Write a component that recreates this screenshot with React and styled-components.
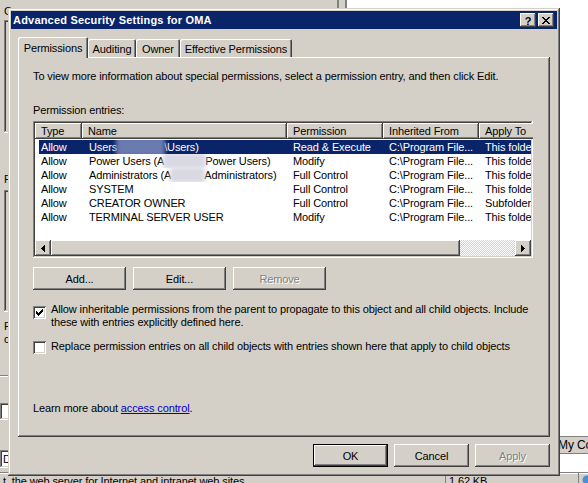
import React from 'react';
import styled, { createGlobalStyle, css } from 'styled-components';

const face = '#d4d0c8';
const shadow = '#808080';
const dark = '#404040';
const navy = '#0a246a';

const GlobalStyle = createGlobalStyle`
  html, body { margin: 0; padding: 0; }
  body {
    background: ${face};
    font-family: "Liberation Sans", Arial, sans-serif;
    font-size: 11px;
    letter-spacing: -0.12px;
    color: #000;
  }
`;

const raised = css`
  box-shadow: inset -1px -1px ${dark}, inset 1px 1px #fff, inset -2px -2px ${shadow}, inset 2px 2px ${face};
`;

const sunken = css`
  box-shadow: inset -1px -1px #fff, inset 1px 1px ${shadow}, inset -2px -2px ${face}, inset 2px 2px ${dark};
`;

// pixel glyphs for the classic controls
const closeGlyph = [
  [0, 0, 2], [6, 0, 2], [1, 1, 2], [5, 1, 2], [2, 2, 4], [3, 3, 2],
  [2, 4, 4], [1, 5, 2], [5, 5, 2], [0, 6, 2], [6, 6, 2],
];
const checkGlyph = [
  [6, 0, 1], [5, 1, 2], [0, 2, 1], [4, 2, 3], [0, 3, 2], [3, 3, 3],
  [0, 4, 5], [1, 5, 3], [2, 6, 1],
];

const PixelIcon = ({ rows, w, h }) => (
  <svg width={w} height={h} viewBox={`0 0 ${w} ${h}`} shapeRendering="crispEdges">
    {rows.map(([x, y, len], i) => (
      <rect key={i} x={x} y={y} width={len} height={1} fill="#000" />
    ))}
  </svg>
);

const Arrow = ({ dir }) => (
  <svg width="4" height="7" viewBox="0 0 4 7" shapeRendering="crispEdges">
    {[1, 3, 5, 7].map((hgt, i) => (
      <rect key={i} x={dir === 'left' ? i : 3 - i} y={(7 - hgt) / 2} width={1} height={hgt} fill="#000" />
    ))}
  </svg>
);

/* ---------- the window behind ---------- */

const Desktop = styled.div`
  position: relative;
  width: 588px;
  height: 483px;
  overflow: hidden;
  background: ${face};
`;

const BackWindow = styled.div`
  display: flex;
  flex-direction: column;
  height: 100%;
`;

const BackBody = styled.div`
  flex: 1;
  display: flex;
  min-height: 0;
`;

const LeftPane = styled.div`
  width: 337px;
  flex-shrink: 0;
  box-sizing: border-box;
  padding-left: 4px;
  display: flex;
  flex-direction: column;
`;

const PaneLabel = styled.div`
  margin-top: ${(p) => p.$mt || 0}px;
  line-height: 13px;
  white-space: pre-line;
`;

const PaneBox = styled.div`
  margin-top: ${(p) => p.$mt || 0}px;
  margin-left: ${(p) => (p.$flush ? -4 : 0)}px;
  height: ${(p) => p.$h}px;
  flex-shrink: 0;
  box-sizing: border-box;
  padding-left: 3px;
  line-height: ${(p) => p.$h}px;
  background: ${(p) => (p.$white ? '#fff' : face)};
  ${sunken}
`;

const Groove = styled.div`
  margin: ${(p) => p.$mt}px 0 0 -4px;
  border-top: 1px solid ${shadow};
  border-bottom: 1px solid #fff;
`;

const Splitter = styled.div`
  width: 10px;
  flex-shrink: 0;
  box-sizing: border-box;
  border-left: 2px solid ${shadow};
  border-right: 2px solid ${shadow};
`;

const RightPane = styled.div`
  flex: 1;
  background: #fff;
  display: flex;
  flex-direction: column;
  justify-content: flex-end;
  padding-bottom: 18px;
`;

const ListStrip = styled.div`
  height: 16px;
  line-height: 16px;
  padding-left: 211px;
  white-space: nowrap;
  background: ${face};
  border-top: 1px solid ${shadow};
  border-bottom: 1px solid ${shadow};
  font-size: 12px;
`;

const StatusBar = styled.div`
  height: 10px;
  flex-shrink: 0;
  display: flex;
  border-top: 1px solid ${shadow};
  box-shadow: inset 0 1px #fff;
  line-height: 13px;
  white-space: nowrap;
  overflow: hidden;
`;

const StatusCell = styled.div`
  width: ${(p) => (p.$w ? `${p.$w}px` : 'auto')};
  flex: ${(p) => (p.$w ? '0 0 auto' : 1)};
  box-sizing: border-box;
  padding: 2px 0 0 3px;
  border-left: ${(p) => (p.$first ? 'none' : `1px solid ${shadow}`)};
`;

/* ---------- the dialog ---------- */

const Dialog = styled.div`
  position: absolute;
  left: 8px;
  top: 8px;
  width: 552px;
  height: 468px;
  box-sizing: border-box;
  padding: 3px;
  display: flex;
  flex-direction: column;
  background: ${face};
  box-shadow: inset -1px -1px ${dark}, inset 1px 1px ${face}, inset -2px -2px ${shadow}, inset 2px 2px #fff;
`;

const TitleBar = styled.div`
  height: 18px;
  flex-shrink: 0;
  display: flex;
  align-items: center;
  gap: 2px;
  padding: 0 3px 0 2px;
  background: ${navy};
  color: #fff;
  font-weight: bold;
  font-size: 11px;
`;

const TitleText = styled.span`
  flex: 1;
  white-space: nowrap;
  letter-spacing: 0.2px;
`;

const CaptionButton = styled.span`
  width: 16px;
  height: 14px;
  box-sizing: border-box;
  display: flex;
  align-items: center;
  justify-content: center;
  background: ${face};
  color: #000;
  font-size: 11px;
  font-weight: bold;
  padding-top: 1px;
  ${raised}
`;

const Client = styled.div`
  flex: 1;
  display: flex;
  flex-direction: column;
  padding: 8px 7px 6px;
`;

const TabRow = styled.div`
  height: 20px;
  display: flex;
  align-items: flex-end;
  position: relative;
  z-index: 1;
`;

const Tab = styled.div`
  width: ${(p) => p.$w}px;
  height: ${(p) => (p.$active ? 21 : 18)}px;
  margin-bottom: ${(p) => (p.$active ? -1 : 0)}px;
  box-sizing: border-box;
  display: flex;
  align-items: center;
  justify-content: center;
  padding-top: ${(p) => (p.$active ? 0 : 1)}px;
  background: ${face};
  border-radius: 2px 2px 0 0;
  white-space: nowrap;
  box-shadow: inset 1px 1px #fff, inset -1px 0 ${dark}, inset -2px 0 ${shadow};
`;

const Panel = styled.div`
  height: 380px;
  box-sizing: border-box;
  padding: 13px 15px 22px;
  display: flex;
  flex-direction: column;
  ${raised}
`;

const Text = styled.div`
  line-height: 13px;
  margin-top: ${(p) => p.$mt || 0}px;
  white-space: nowrap;
`;

const ListView = styled.div`
  margin-top: 4px;
  width: 500px;
  height: 137px;
  box-sizing: border-box;
  padding: 2px;
  display: flex;
  flex-direction: column;
  overflow: hidden;
  background: #fff;
  ${sunken}
`;

const Header = styled.div`
  display: flex;
  height: 16px;
  flex-shrink: 0;
`;

const HeaderCell = styled.div`
  width: ${(p) => p.$w}px;
  flex-shrink: 0;
  box-sizing: border-box;
  padding-left: 6px;
  line-height: 16px;
  white-space: nowrap;
  overflow: hidden;
  background: ${face};
  ${raised}
`;

const Rows = styled.div`
  flex: 1;
  padding-top: 1px;
  overflow: hidden;
`;

const Row = styled.div`
  display: flex;
  height: 14px;
  line-height: 14px;
  margin-left: 4px;
  width: max-content;
  background: ${(p) => (p.$selected ? navy : 'transparent')};
  color: ${(p) => (p.$selected ? '#fff' : '#000')};
`;

const Cell = styled.div`
  width: ${(p) => p.$w}px;
  flex-shrink: 0;
  box-sizing: border-box;
  padding-left: ${(p) => p.$pad}px;
  white-space: nowrap;
  overflow: hidden;
`;

const Redacted = styled.span`
  position: relative;
  display: inline-block;
  width: ${(p) => p.$w}px;
  height: 14px;
  vertical-align: top;
  &::before {
    content: '';
    position: absolute;
    left: -1px;
    right: -1px;
    top: ${(p) => (p.$dark ? -3 : -1)}px;
    bottom: ${(p) => (p.$dark ? -3 : -1)}px;
    background: ${(p) => (p.$dark ? '#6a7bb0' : '#d9d9e3')};
    filter: blur(2px);
  }
`;

const HScroll = styled.div`
  height: 16px;
  flex-shrink: 0;
  display: flex;
`;

const ScrollButton = styled.div`
  width: 16px;
  height: 16px;
  flex-shrink: 0;
  display: flex;
  align-items: center;
  justify-content: center;
  background: ${face};
  ${raised}
`;

const Thumb = styled.div`
  width: 409px;
  flex-shrink: 0;
  background: ${face};
  ${raised}
`;

const Track = styled.div`
  flex: 1;
  background-color: #fff;
  background-image: repeating-conic-gradient(${face} 0 25%, #fff 0 50%);
  background-size: 2px 2px;
`;

const ButtonRow = styled.div`
  display: flex;
  gap: ${(p) => p.$gap}px;
  margin-top: ${(p) => p.$mt || 0}px;
  justify-content: ${(p) => (p.$end ? 'flex-end' : 'flex-start')};
`;

const Button = styled.button`
  width: ${(p) => p.$w}px;
  height: 23px;
  padding: 0;
  border: none;
  background: ${face};
  font: inherit;
  letter-spacing: inherit;
  color: ${(p) => (p.disabled ? shadow : '#000')};
  text-shadow: ${(p) => (p.disabled ? '1px 1px #fff' : 'none')};
  ${(p) =>
    p.$default
      ? css`box-shadow: inset 0 0 0 1px #000, inset -2px -2px ${dark}, inset 2px 2px #fff, inset -3px -3px ${shadow};`
      : raised}
`;

const CheckRow = styled.div`
  display: flex;
  align-items: flex-start;
  gap: 5px;
  margin-top: ${(p) => p.$mt}px;
  line-height: 13px;
`;

const CheckBox = styled.span`
  width: 13px;
  height: 13px;
  flex-shrink: 0;
  box-sizing: border-box;
  margin-top: ${(p) => p.$offset}px;
  display: flex;
  align-items: center;
  justify-content: center;
  background: #fff;
  box-shadow: inset 1px 1px ${shadow}, inset -1px -1px #fff, inset 2px 2px ${dark}, inset -2px -2px ${face};
`;

const CheckLabel = styled.span`
  max-width: 484px;
`;

const Footer = styled.div`
  margin-top: auto;
  line-height: 13px;
`;

const Link = styled.a`
  color: #0000cc;
  text-decoration: underline;
`;

const columns = [
  { title: 'Type', w: 47 },
  { title: 'Name', w: 205 },
  { title: 'Permission', w: 96 },
  { title: 'Inherited From', w: 96 },
  { title: 'Apply To', w: 80 },
];

const entries = [
  { name: <>Users<Redacted $w={47} $dark />\Users)</>, perm: 'Read & Execute', apply: 'This folder, subfolders and files', selected: true },
  { name: <>Power Users (A<Redacted $w={41} />Power Users)</>, perm: 'Modify', apply: 'This folder, subfolders and files' },
  { name: <>Administrators (A<Redacted $w={33} />Administrators)</>, perm: 'Full Control', apply: 'This folder, subfolders and files' },
  { name: 'SYSTEM', perm: 'Full Control', apply: 'This folder, subfolders and files' },
  { name: 'CREATOR OWNER', perm: 'Full Control', apply: 'Subfolders and files only' },
  { name: 'TERMINAL SERVER USER', perm: 'Modify', apply: 'This folder, subfolders and files' },
];

const tabs = [
  { label: 'Permissions', w: 70, active: true },
  { label: 'Auditing', w: 48 },
  { label: 'Owner', w: 44 },
  { label: 'Effective Permissions', w: 112 },
];

export default function App() {
  return (
    <>
      <GlobalStyle />
      <Desktop>
        <BackWindow>
          <BackBody>
            <LeftPane>
              <PaneLabel $mt={5}>Group or user names:</PaneLabel>
              <PaneBox $mt={2} $h={113} />
              <PaneLabel $mt={40}>Files</PaneLabel>
              <PaneBox $mt={4} $h={122} />
              <PaneLabel $mt={8}>{'Folder\ncontents'}</PaneLabel>
              <Groove $mt={29} />
              <PaneBox $mt={26} $h={17} $white $flush />
              <PaneBox $mt={30} $h={18} $white $flush>Description</PaneBox>
            </LeftPane>
            <Splitter />
            <RightPane>
              <ListStrip>My Computer</ListStrip>
            </RightPane>
          </BackBody>
          <StatusBar>
            <StatusCell $w={445} $first>t, the web server for Internet and intranet web sites</StatusCell>
            <StatusCell $w={133}>1.62 KB</StatusCell>
            <StatusCell>
              <svg width="10" height="10" viewBox="0 0 10 10">
                <circle cx="5" cy="5" r="4.5" fill="#4a8fd8" />
              </svg>
            </StatusCell>
          </StatusBar>
        </BackWindow>

        <Dialog>
          <TitleBar>
            <TitleText>Advanced Security Settings for OMA</TitleText>
            <CaptionButton>?</CaptionButton>
            <CaptionButton>
              <PixelIcon rows={closeGlyph} w={8} h={7} />
            </CaptionButton>
          </TitleBar>
          <Client>
            <TabRow>
              {tabs.map((t) => (
                <Tab key={t.label} $w={t.w} $active={t.active}>
                  {t.label}
                </Tab>
              ))}
            </TabRow>
            <Panel>
              <Text>
                To view more information about special permissions, select a permission entry, and then click Edit.
              </Text>
              <Text $mt={21}>Permission entries:</Text>
              <ListView>
                <Header>
                  {columns.map((c) => (
                    <HeaderCell key={c.title} $w={c.w}>
                      {c.title}
                    </HeaderCell>
                  ))}
                </Header>
                <Rows>
                  {entries.map((e, i) => (
                    <Row key={i} $selected={e.selected}>
                      <Cell $w={43} $pad={2}>Allow</Cell>
                      <Cell $w={205} $pad={7}>{e.name}</Cell>
                      <Cell $w={96} $pad={6}>{e.perm}</Cell>
                      <Cell $w={96} $pad={6}>C:\Program File...</Cell>
                      <Cell $w={80} $pad={6}>{e.apply}</Cell>
                    </Row>
                  ))}
                </Rows>
                <HScroll>
                  <ScrollButton>
                    <Arrow dir="left" />
                  </ScrollButton>
                  <Thumb />
                  <Track />
                  <ScrollButton>
                    <Arrow dir="right" />
                  </ScrollButton>
                </HScroll>
              </ListView>
              <ButtonRow $gap={7} $mt={9}>
                <Button $w={93}>Add...</Button>
                <Button $w={93}>Edit...</Button>
                <Button $w={93} disabled>Remove</Button>
              </ButtonRow>
              <CheckRow $mt={13}>
                <CheckBox $offset={3}>
                  <PixelIcon rows={checkGlyph} w={7} h={7} />
                </CheckBox>
                <CheckLabel>
                  Allow inheritable permissions from the parent to propagate to this object and all child objects. Include these with entries explicitly defined here.
                </CheckLabel>
              </CheckRow>
              <CheckRow $mt={11}>
                <CheckBox $offset={1} />
                <CheckLabel>
                  Replace permission entries on all child objects with entries shown here that apply to child objects
                </CheckLabel>
              </CheckRow>
              <Footer>
                Learn more about <Link href="#">access control</Link>.
              </Footer>
            </Panel>
            <ButtonRow $gap={6} $mt={7} $end>
              <Button $w={75} $default>OK</Button>
              <Button $w={75}>Cancel</Button>
              <Button $w={75} disabled>Apply</Button>
            </ButtonRow>
          </Client>
        </Dialog>
      </Desktop>
    </>
  );
}
